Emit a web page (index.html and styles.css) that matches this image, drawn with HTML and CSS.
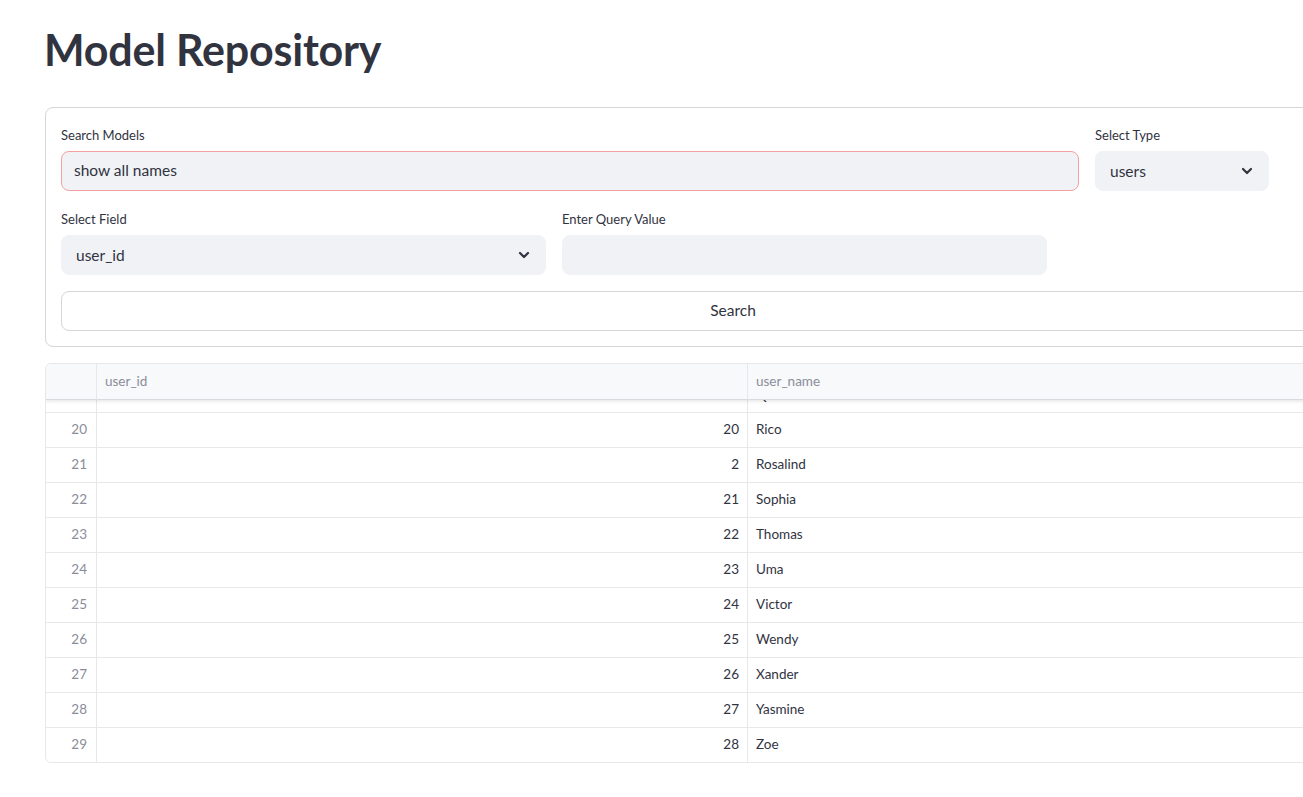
FILE: index.html
```html
<!DOCTYPE html>
<html lang="en">
<head>
<meta charset="utf-8">
<title>Model Repository</title>
<link rel="stylesheet" href="styles.css">
</head>
<body>
<main class="main">
  <h1 class="title">Model Repository</h1>

  <form class="form">
    <div class="row row-1">
      <div class="field">
        <label class="label">Search Models</label>
        <div class="input input-focus">show all names</div>
      </div>
      <div class="field">
        <label class="label">Select Type</label>
        <div class="input select">
          <span>users</span>
          <svg class="chev" width="12" height="8" viewBox="0 0 12 8"><path d="M2 2l4 4 4-4" fill="none" stroke="#31333f" stroke-width="2.2" stroke-linecap="round" stroke-linejoin="round"/></svg>
        </div>
      </div>
    </div>
    <div class="row row-2">
      <div class="field">
        <label class="label">Select Field</label>
        <div class="input select">
          <span>user_id</span>
          <svg class="chev" width="12" height="8" viewBox="0 0 12 8"><path d="M2 2l4 4 4-4" fill="none" stroke="#31333f" stroke-width="2.2" stroke-linecap="round" stroke-linejoin="round"/></svg>
        </div>
      </div>
      <div class="field">
        <label class="label">Enter Query Value</label>
        <div class="input"></div>
      </div>
    </div>
    <div class="button">Search</div>
  </form>

  <div class="table">
    <div class="tr th">
      <div class="td idx"></div>
      <div class="td">user_id</div>
      <div class="td">user_name</div>
    </div>
    <div class="tr partial">
      <div class="td idx"><span>19</span></div>
      <div class="td num"><span>19</span></div>
      <div class="td"><span>Quinn</span></div>
    </div>
    <div class="tr"><div class="td idx">20</div><div class="td num">20</div><div class="td">Rico</div></div>
    <div class="tr"><div class="td idx">21</div><div class="td num">2</div><div class="td">Rosalind</div></div>
    <div class="tr"><div class="td idx">22</div><div class="td num">21</div><div class="td">Sophia</div></div>
    <div class="tr"><div class="td idx">23</div><div class="td num">22</div><div class="td">Thomas</div></div>
    <div class="tr"><div class="td idx">24</div><div class="td num">23</div><div class="td">Uma</div></div>
    <div class="tr"><div class="td idx">25</div><div class="td num">24</div><div class="td">Victor</div></div>
    <div class="tr"><div class="td idx">26</div><div class="td num">25</div><div class="td">Wendy</div></div>
    <div class="tr"><div class="td idx">27</div><div class="td num">26</div><div class="td">Xander</div></div>
    <div class="tr"><div class="td idx">28</div><div class="td num">27</div><div class="td">Yasmine</div></div>
    <div class="tr last"><div class="td idx">29</div><div class="td num">28</div><div class="td">Zoe</div></div>
  </div>
</main>
</body>
</html>
```

FILE: styles.css
```css
html, body {
  margin: 0;
  padding: 0;
  background: #ffffff;
  overflow: hidden;
}
body {
  font-family: Lato, "Noto Sans", sans-serif;
  color: #31333f;
  width: 1303px;
  height: 797px;
}
.main {
  padding: 22px 0 0 45px;
  width: 1376px;
}
.title {
  margin: 0 0 29px -1px;
  font-size: 43px;
  line-height: 56px;
  font-weight: 700;
  color: #31333f;
  letter-spacing: -0.2px;
}
.form {
  border: 1px solid #d6d6d9;
  border-radius: 8px;
  padding: 15px;
  display: flex;
  flex-direction: column;
  gap: 16px;
}
.row {
  display: grid;
  column-gap: 16px;
}
.row-1 { grid-template-columns: 1018px 174px; }
.row-2 { grid-template-columns: 485px 485px; }
.field {
  display: flex;
  flex-direction: column;
}
.label {
  font-size: 13px;
  line-height: 20px;
  height: 28px;
  padding-top: 2px;
  box-sizing: border-box;
  color: #31333f;
}
.input {
  box-sizing: border-box;
  height: 40px;
  background: #f0f2f6;
  border: 1px solid #f0f2f6;
  border-radius: 8px;
  padding: 0 12px;
  font-size: 15.5px;
  line-height: 37px;
  color: #31333f;
}
.input-focus {
  border-color: #f3a0a0;
}
.select {
  display: flex;
  align-items: center;
  justify-content: space-between;
  padding: 0 15px 0 14px;
}
.chev { display: block; }
.button {
  box-sizing: border-box;
  height: 40px;
  border: 1px solid #d6d6d9;
  border-radius: 8px;
  display: flex;
  align-items: center;
  justify-content: center;
  font-size: 15.5px;
  color: #31333f;
  padding-bottom: 2px;
}
.table {
  margin-top: 16px;
  border: 1px solid #e8e8ec;
  border-radius: 6px;
  overflow: hidden;
  width: 1400px;
  font-size: 13.5px;
}
.tr {
  display: grid;
  grid-template-columns: 51px 651px 1fr;
  height: 35px;
}
.td {
  box-sizing: border-box;
  border-right: 1px solid #e8e8ec;
  border-bottom: 1px solid #e8e8ec;
  padding: 0 8px 2px;
  display: flex;
  align-items: center;
  color: #31333f;
  white-space: nowrap;
}
.idx, .num {
  justify-content: flex-end;
}
.idx {
  color: #8a8d9a;
  padding-right: 9px;
}
.num { padding-right: 8px; }
.th {
  height: 36px;
  position: relative;
  z-index: 1;
  box-shadow: 0 1px 4px rgba(0, 0, 0, 0.12);
}
.th .td {
  background: #f8f9fb;
  color: #8a8d9a;
  border-bottom: 1px solid #d9d9de;
  padding-top: 1px;
}
.partial {
  height: 13px;
  overflow: hidden;
}
.partial .td {
  align-items: flex-start;
  overflow: hidden;
  padding-bottom: 0;
}
.partial .td span {
  display: block;
  line-height: 20px;
  height: 20px;
  margin-top: -15px;
}
.last .td { border-bottom: none; }
.last { height: 34px; }
```
